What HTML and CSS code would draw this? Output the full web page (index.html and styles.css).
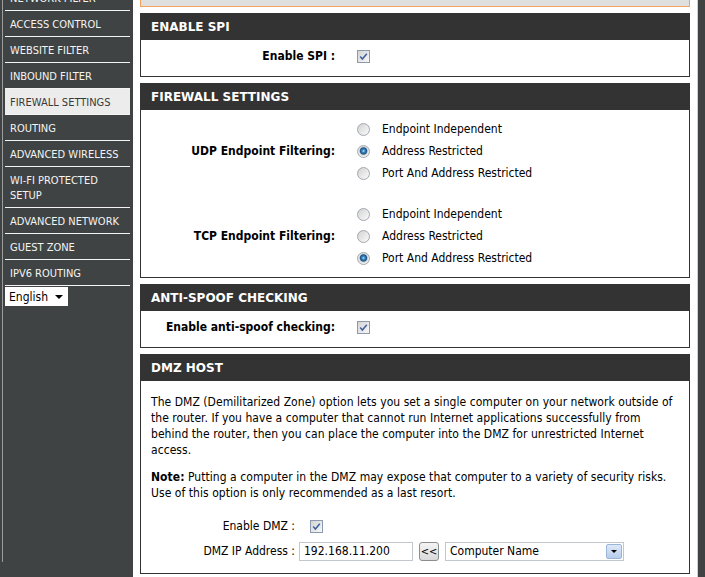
FILE: index.html
```html
<!DOCTYPE html>
<html lang="en">
<head>
<meta charset="UTF-8" />
<title>Firewall Settings</title>
<link rel="stylesheet" href="styles.css">
</head>
<body>
<div class="page">
  <aside class="sidebar">
    <div class="sidebar-in">
      <ul class="nav">
        <li>NETWORK FILTER</li>
        <li>ACCESS CONTROL</li>
        <li>WEBSITE FILTER</li>
        <li>INBOUND FILTER</li>
        <li class="active">FIREWALL SETTINGS</li>
        <li>ROUTING</li>
        <li>ADVANCED WIRELESS</li>
        <li>WI-FI PROTECTED SETUP</li>
        <li>ADVANCED NETWORK</li>
        <li>GUEST ZONE</li>
        <li>IPV6 ROUTING</li>
      </ul>
      <div class="lang"><span>English</span><span class="caret"></span></div>
    </div>
  </aside>

  <main class="content">
    <div class="notice"></div>

    <section class="box">
      <h2>ENABLE SPI</h2>
      <div class="box-body short">
        <div class="row">
          <span class="lbl">Enable SPI :</span>
          <span class="ctl"><span class="cb"><svg width="11" height="11" viewBox="0 0 11 11"><path d="M2.2 5.6l2.2 2.4 4.4-5.2" fill="none" stroke="#3d5f9e" stroke-width="1.5"/></svg></span></span>
        </div>
      </div>
    </section>

    <section class="box">
      <h2>FIREWALL SETTINGS</h2>
      <div class="box-body fw">
        <div class="row">
          <span class="lbl">UDP Endpoint Filtering:</span>
          <div class="ctl">
            <div class="opt"><span class="rb"></span>Endpoint Independent</div>
            <div class="opt"><span class="rb on"></span>Address Restricted</div>
            <div class="opt"><span class="rb"></span>Port And Address Restricted</div>
          </div>
        </div>
        <div class="row group2">
          <span class="lbl">TCP Endpoint Filtering:</span>
          <div class="ctl">
            <div class="opt"><span class="rb"></span>Endpoint Independent</div>
            <div class="opt"><span class="rb"></span>Address Restricted</div>
            <div class="opt"><span class="rb on"></span>Port And Address Restricted</div>
          </div>
        </div>
      </div>
    </section>

    <section class="box">
      <h2>ANTI-SPOOF CHECKING</h2>
      <div class="box-body short">
        <div class="row">
          <span class="lbl">Enable anti-spoof checking:</span>
          <span class="ctl"><span class="cb"><svg width="11" height="11" viewBox="0 0 11 11"><path d="M2.2 5.6l2.2 2.4 4.4-5.2" fill="none" stroke="#3d5f9e" stroke-width="1.5"/></svg></span></span>
        </div>
      </div>
    </section>

    <section class="box">
      <h2>DMZ HOST</h2>
      <div class="box-body dmz">
        <p>The DMZ (Demilitarized Zone) option lets you set a single computer on your network outside of the router. If you have a computer that cannot run Internet applications successfully from behind the router, then you can place the computer into the DMZ for unrestricted Internet access.</p>
        <p class="note"><b>Note:</b> Putting a computer in the DMZ may expose that computer to a variety of security risks. Use of this option is only recommended as a last resort.</p>
        <div class="dmz-form">
          <span class="dlbl">Enable DMZ :</span>
          <span class="dctl"><span class="cb dmz-cb"><svg width="11" height="11" viewBox="0 0 11 11"><path d="M2.2 5.6l2.2 2.4 4.4-5.2" fill="none" stroke="#3d5f9e" stroke-width="1.5"/></svg></span></span>
          <span class="dlbl">DMZ IP Address :</span>
          <span class="dctl">
            <span class="ip">192.168.11.200</span>
            <span class="btn">&lt;&lt;</span>
            <span class="combo"><span>Computer Name</span><span class="combo-btn"><span class="caret"></span></span></span>
          </span>
        </div>
      </div>
    </section>
  </main>

  <div class="rail"></div>
</div>
</body>
</html>
```

FILE: styles.css
```css
body {
  margin: 0;
  font-family: "DejaVu Sans Condensed", "DejaVu Sans", sans-serif;
  font-stretch: condensed;
  font-size: 12px;
  color: #000;
  background: #fff;
}
.page {
  display: flex;
  height: 577px;
  overflow: hidden;
}
.sidebar {
  width: 133px;
  flex: none;
  box-sizing: border-box;
  padding-left: 2px;
  background: #404343;
}
.sidebar-in {
  height: 100%;
  border-left: 1px solid #9c9c9c;
  padding-left: 2px;
}
.nav {
  list-style: none;
  margin: -15px 0 0;
  padding: 0;
  width: 125px;
}
.nav li {
  padding: 6px 0 4px 5px;
  line-height: 15px;
  font-size: 11px;
  color: #f4f4f4;
  border-bottom: 1px solid #f4f4f4;
}
.nav li.active {
  background: #ececec;
  color: #3a3a3a;
}
.lang {
  margin-top: 1px;
  width: 63px;
  height: 19px;
  box-sizing: border-box;
  padding: 0 5px 0 4px;
  background: #fff;
  display: flex;
  align-items: center;
  justify-content: space-between;
  font-size: 12px;
}
.caret {
  width: 0;
  height: 0;
  border-left: 4px solid transparent;
  border-right: 4px solid transparent;
  border-top: 4px solid #000;
}
.content {
  flex: 1;
  padding: 0 7px;
}
.rail {
  width: 8px;
  flex: none;
  box-sizing: border-box;
  background: #404343;
  border-left: 1px solid #d0d0d0;
}
.notice {
  height: 6px;
  border: 1px solid #f2a35e;
  border-top: 0;
  background: #dfdfdf;
  margin-bottom: 6px;
}
.box {
  border: 1px solid #333;
  border-top: 0;
  margin-bottom: 6px;
}
.box h2 {
  margin: 0;
  height: 27px;
  line-height: 28px;
  padding-left: 10px;
  background: #333;
  color: #fff;
  font-family: "DejaVu Sans", sans-serif;
  font-stretch: normal;
  font-size: 12px;
  font-weight: bold;
}
.box-body.short {
  padding: 7px 0 11px;
}
.box-body.fw {
  padding: 8px 0 8px;
}
.row {
  display: grid;
  grid-template-columns: 204px 1fr;
  align-items: center;
  min-height: 18px;
}
.row.group2 {
  margin-top: 19px;
}
.lbl {
  text-align: right;
  padding-right: 10px;
  font-weight: bold;
}
.ctl {
  padding-left: 12px;
  display: flex;
  flex-direction: column;
}
.opt {
  display: flex;
  align-items: center;
  gap: 12px;
  height: 22px;
}
.cb {
  display: flex;
  align-items: center;
  justify-content: center;
  width: 11px;
  height: 11px;
  border: 1px solid #8c9ab0;
  background: linear-gradient(135deg, #d3d3d3, #f7f7f7);
}
.rb {
  width: 11px;
  height: 11px;
  border: 1px solid #a2a8ae;
  border-radius: 50%;
  background: linear-gradient(135deg, #d2d2d2, #fbfbfb);
}
.rb.on {
  background: radial-gradient(circle at 50% 45%, #bfe2f6 0, #3b86c2 1.5px, #1a5488 3.2px, #d8d8d8 4.2px, #f6f6f6 6px);
}
.box-body.dmz {
  padding: 13px 10px 12px;
  line-height: 16px;
}
.dmz p {
  margin: 0;
  letter-spacing: 0.05px;
}
.dmz p.note {
  margin-top: 11px;
}
.dmz-form {
  margin-top: 15px;
  display: grid;
  grid-template-columns: 144px 1fr;
  grid-auto-rows: 20px;
  row-gap: 5px;
  column-gap: 4px;
  align-items: center;
}
.dlbl {
  text-align: right;
}
.dctl {
  display: flex;
  align-items: center;
}
.dmz-cb {
  margin-left: 11px;
}
.ip {
  width: 114px;
  height: 19px;
  box-sizing: border-box;
  border: 1px solid #c2c7cd;
  padding-left: 4px;
  line-height: 17px;
}
.btn {
  margin-left: 6px;
  width: 20px;
  height: 19px;
  box-sizing: border-box;
  border: 1px solid #8d8d8d;
  border-radius: 3px;
  background: linear-gradient(#f4f4f4, #d9d9d9);
  text-align: center;
  line-height: 17px;
  font-size: 11px;
}
.combo {
  margin-left: 6px;
  width: 179px;
  height: 19px;
  box-sizing: border-box;
  border: 1px solid #c2c7cd;
  padding: 0 1px 0 4px;
  display: flex;
  align-items: center;
  justify-content: space-between;
}
.combo-btn {
  width: 16px;
  height: 15px;
  box-sizing: border-box;
  border: 1px solid #9bb5d6;
  border-radius: 2px;
  background: linear-gradient(#dde9f8, #b6cdee);
  display: flex;
  align-items: center;
  justify-content: center;
}
.combo-btn .caret {
  border-left-width: 3px;
  border-right-width: 3px;
  border-top-width: 3px;
}
```
